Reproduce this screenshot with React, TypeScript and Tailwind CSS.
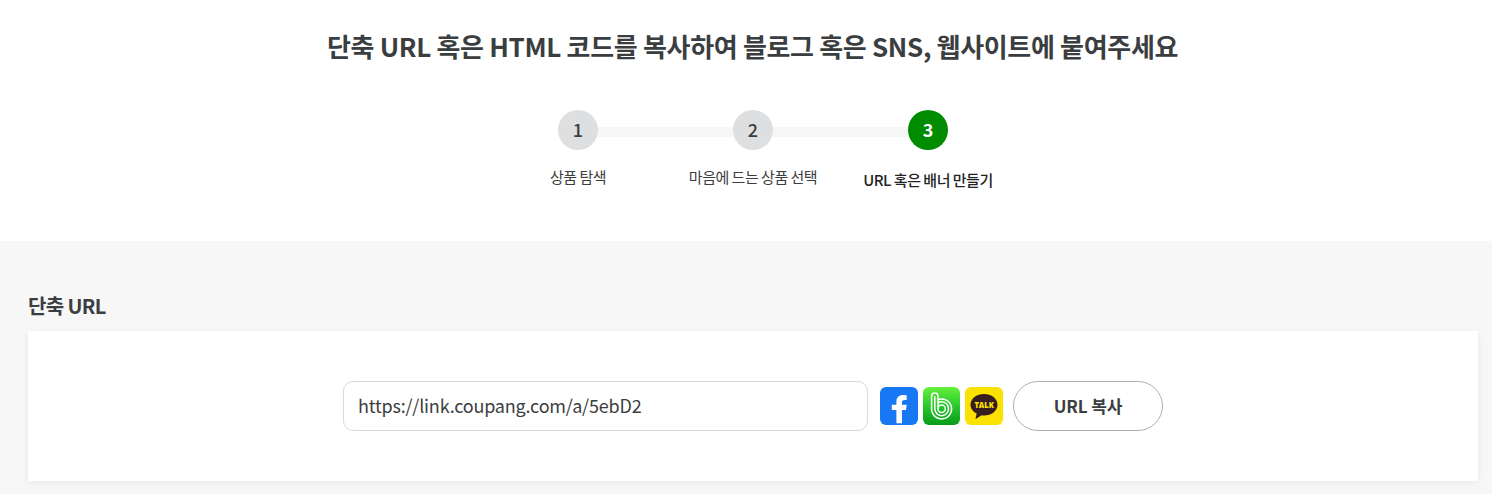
const steps = [
  { n: 1, label: "상품 탐색", active: false },
  { n: 2, label: "마음에 드는 상품 선택", active: false },
  { n: 3, label: "URL 혹은 배너 만들기", active: true },
];

function FacebookIcon() {
  return (
    <svg width="38" height="38" viewBox="0 0 38 38" className="block">
      <rect width="38" height="38" rx="6" fill="#1877f2" />
      <path
        d="M16.400 36.300V23h-4.600v-5.300h4.600v-2.700c0-4.700 2.600-6.900 6.900-6.900 1.400 0 2.500.1 3.400.3v4.500h-2.100c-2 0-2.600 1-2.600 2.600v2.200h4.700l-.7 5.300H22v13.300z"
        fill="#fff"
      />
    </svg>
  );
}

function BandIcon() {
  return (
    <svg width="37" height="38" viewBox="0 0 37 38" className="block">
      <defs>
        <linearGradient id="band" x1="0" y1="0" x2="0" y2="1">
          <stop offset="0" stopColor="#66f03c" />
          <stop offset="0.5" stopColor="#2ac82e" />
          <stop offset="1" stopColor="#089b1c" />
        </linearGradient>
      </defs>
      <rect width="37" height="38" rx="6" fill="url(#band)" />
      <g fill="none" stroke="#fff" strokeWidth="1.5">
        <path d="M8.600 21.800V9.300a3.200 3.200 0 0 1 6.400 0V12.600a10 10 0 1 1-6.400 9.200Z" />
        <path d="M11.800 22V9.300" />
        <path d="M15 12.600V21.800" />
        <path d="M11.800 21.800a6.900 6.900 0 1 0 3.200-5.900" />
        <circle cx="18.600" cy="21.800" r="3.700" />
      </g>
    </svg>
  );
}

function TalkIcon() {
  return (
    <svg width="38" height="38" viewBox="0 0 38 38" className="block">
      <rect width="38" height="38" rx="6" fill="#fae100" />
      <path
        d="M19 7c7.6 0 13.5 4.7 13.5 10.8S26.600 28.500 19 28.500c-.9 0-1.700-.1-2.500-.2L11.500 31.600c-.6.4-1.100.1-.9-.6l1.100-4.400C8 24.700 5.500 21.500 5.500 17.800 5.500 11.700 11.400 7 19 7z"
        fill="#371d1e"
      />
      <text
        x="9.400"
        y="21.200"
        textLength="19.500"
        lengthAdjust="spacingAndGlyphs"
        fill="#fae100"
        className="font-['Open_Sans',sans-serif] text-[9px] font-extrabold"
      >
        TALK
      </text>
    </svg>
  );
}

export default function App() {
  return (
    <main className="flex h-[494px] w-full flex-col overflow-hidden bg-white font-['Noto_Sans_CJK_KR',sans-serif] text-[#3b3e40]">
      <header className="flex h-[241px] shrink-0 flex-col items-center pl-[13px]">
        <h1 className="mt-[26px] text-[26px] leading-10 font-bold tracking-[-0.33px] whitespace-nowrap">
          단축 URL 혹은 HTML 코드를 복사하여 블로그 혹은 SNS, 웹사이트에 붙여주세요
        </h1>
        <ol className="mt-11 ml-px flex">
          {steps.map((s, i) => (
            <li key={s.n} className="flex w-[175px] flex-col items-center">
              <div className="flex w-full items-center">
                <span className={i > 0 ? "mt-1 h-[10px] flex-1 bg-[#f6f6f6]" : "flex-1"} />
                <span
                  className={
                    s.active
                      ? "flex size-10 items-center justify-center rounded-full bg-[#008c00] pb-0.5 text-lg font-bold text-white"
                      : "flex size-10 items-center justify-center rounded-full bg-[#dddfe1] pb-0.5 text-lg font-medium"
                  }
                >
                  {s.n}
                </span>
                <span className={i < 2 ? "mt-1 h-[10px] flex-1 bg-[#f6f6f6]" : "flex-1"} />
              </div>
              <span
                className={
                  s.active
                    ? "mt-5 text-[15px] leading-5 font-medium tracking-[-0.5px] whitespace-nowrap text-[#212427]"
                    : "mt-[17px] text-[15px] leading-5 tracking-[-0.5px] whitespace-nowrap"
                }
              >
                {s.label}
              </span>
            </li>
          ))}
        </ol>
      </header>
      <section className="flex-1 bg-[#f7f7f7] pt-[50px] pr-[14px] pl-7">
        <h2 className="text-xl leading-[30px] font-bold tracking-[-0.65px]">단축 URL</h2>
        <div className="mt-[10px] flex h-[150px] items-center justify-center bg-white shadow-[0_2px_8px_rgba(0,0,0,0.06)]">
          <input
            readOnly
            value="https://link.coupang.com/a/5ebD2"
            className="h-[50px] w-[525px] rounded-[10px] border border-[#d7d9db] px-[14px] pb-0.5 text-lg tracking-[-0.2px] outline-none"
          />
          <div className="ml-3 flex gap-[5px]">
            <FacebookIcon />
            <BandIcon />
            <TalkIcon />
          </div>
          <button className="ml-[10px] h-[50px] w-[150px] rounded-full border border-[#acafb2] text-[17px] font-bold tracking-[-0.1px]">
            URL 복사
          </button>
        </div>
      </section>
    </main>
  );
}
